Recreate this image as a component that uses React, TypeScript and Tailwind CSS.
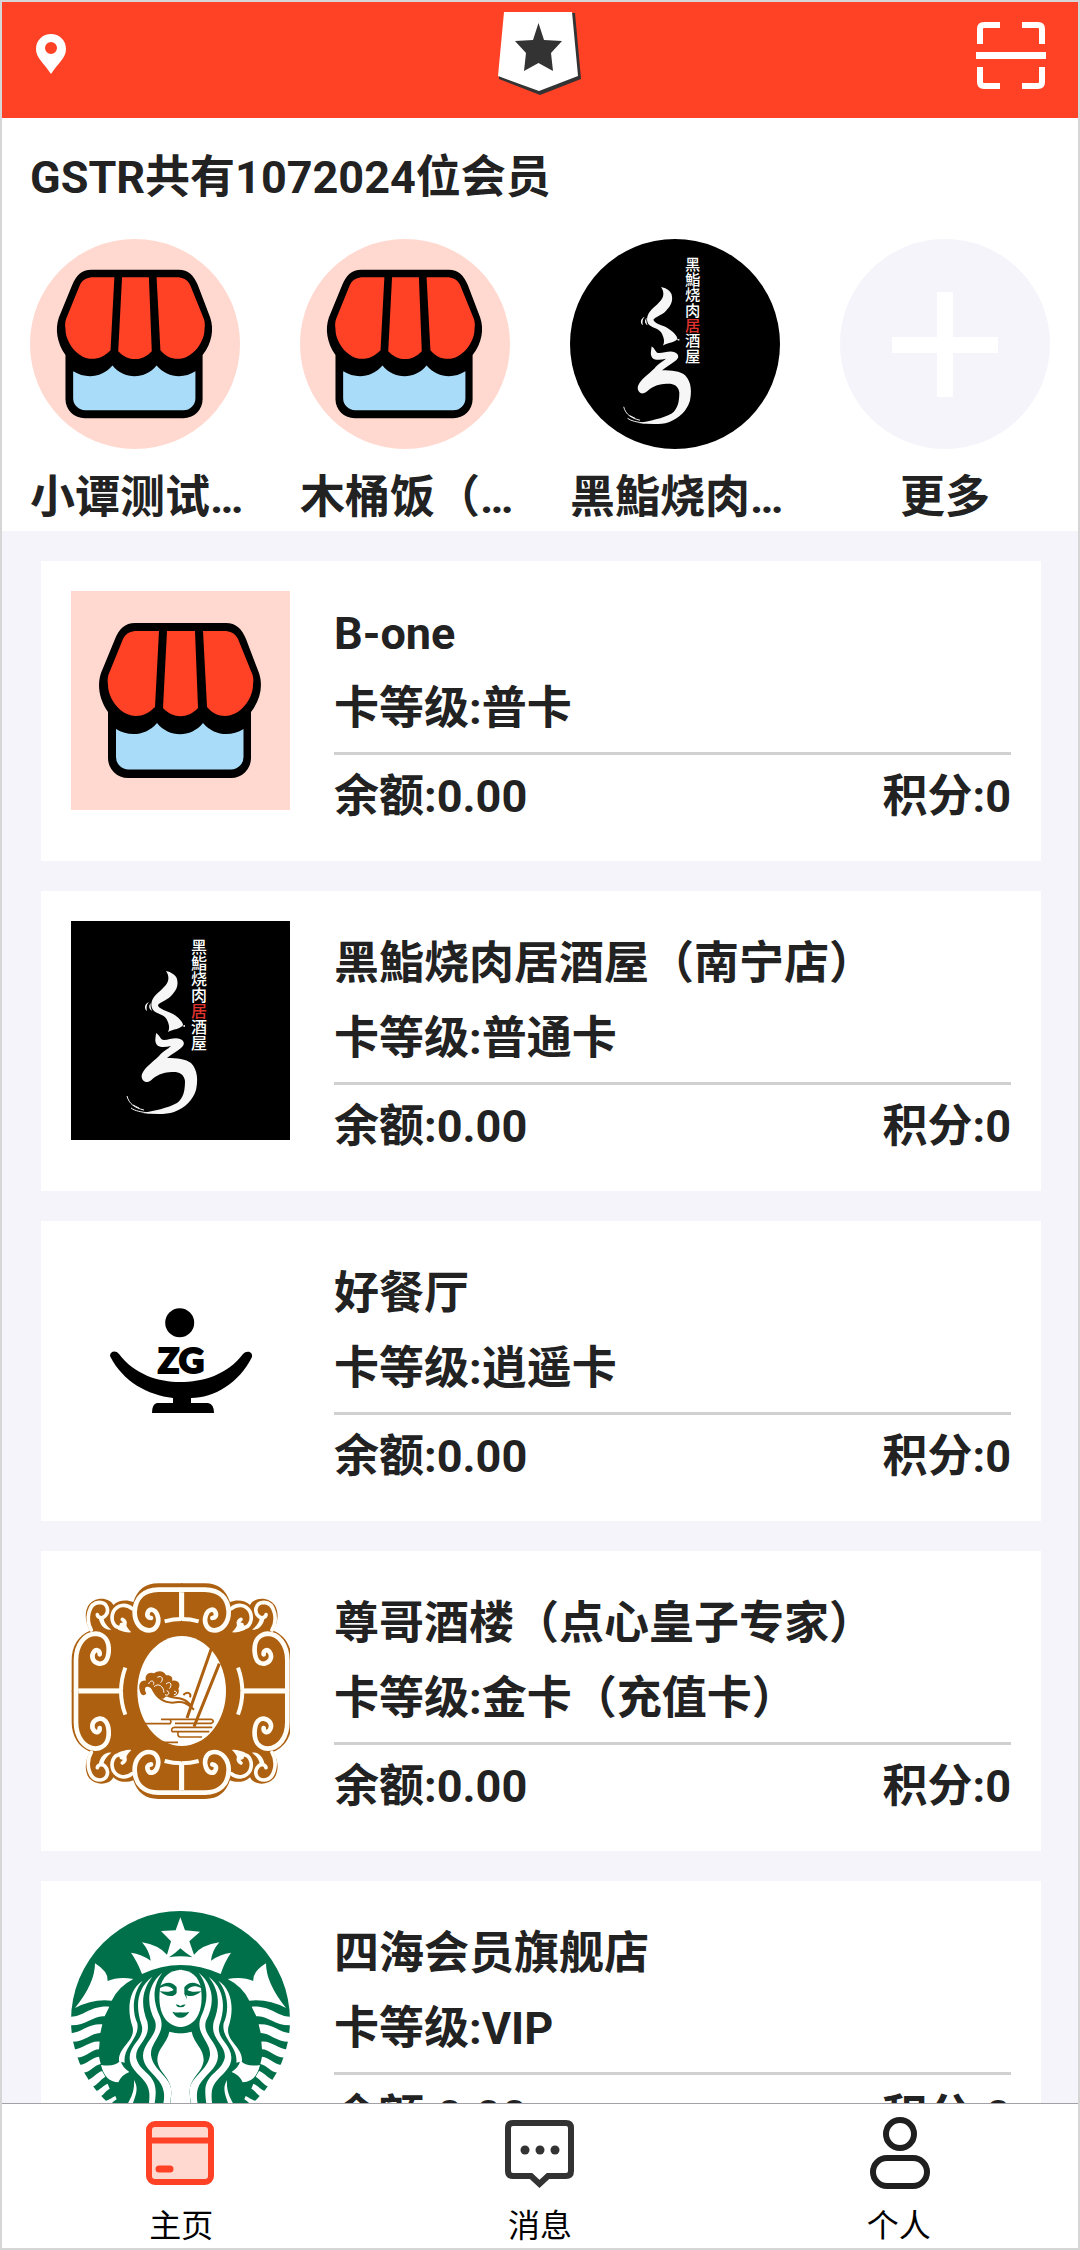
import React from "react";

type LogoName = "store" | "kuro" | "bowl" | "ornament" | "siren";

interface Shop {
  name: string;
  logo: LogoName;
}

interface Card extends Shop {
  level: string;
  balance: string;
  points: number;
}

const shops: Shop[] = [
  { name: "小谭测试…", logo: "store" },
  { name: "木桶饭（…", logo: "store" },
  { name: "黑鮨烧肉…", logo: "kuro" },
];

const cards: Card[] = [
  { name: "B-one", logo: "store", level: "普卡", balance: "0.00", points: 0 },
  { name: "黑鮨烧肉居酒屋（南宁店）", logo: "kuro", level: "普通卡", balance: "0.00", points: 0 },
  { name: "好餐厅", logo: "bowl", level: "逍遥卡", balance: "0.00", points: 0 },
  { name: "尊哥酒楼（点心皇子专家）", logo: "ornament", level: "金卡（充值卡）", balance: "0.00", points: 0 },
  { name: "四海会员旗舰店", logo: "siren", level: "VIP", balance: "0.00", points: 0 },
];

const StoreLogo = () => (
  <svg viewBox="0 0 219 219" className="block w-full h-full bg-[#ffd9cf]">
    <path d="M64 32H155C165 32 171 38 175 48L188 82C192 94 190 108 180 121V167a20 20 0 0 1-20 20H57a20 20 0 0 1-20-20V121C28 108 26 94 30 82L44 48C48 38 54 32 64 32Z" />
    <g fill="#ff4126">
      <path d="M66 40H88L84 116C78 122 72 125 65 125C50 125 37 108 37 94C36 88 37 84 39 80L52 48C55 42 60 40 66 40Z" />
      <path d="M96 40H124L127 117C117 128 102 128 92 117Z" />
      <path d="M66 40H87L83 116C78 122 72 125 65 125C50 125 37 108 37 94C36 88 37 84 39 80L52 48C55 42 60 40 66 40Z" transform="translate(219 0) scale(-1 1)" />
    </g>
    <path d="M45 138C58 146 75 145 86 132C98 147 120 147 132 132C143 145 160 146 172.500 138V166a12.500 12.500 0 0 1-12.500 12.500H58A12.500 12.500 0 0 1 45 166Z" fill="#a9dcf9" />
  </svg>
);

const KuroLogo = () => (
  <svg viewBox="0 0 219 219" className="block w-full h-full bg-black">
    <g fill="#f6f6f6">
      <path d="M95 50C100 51 105 54 106 58C108 66 104 71 100 75C95 80 89 81 87 84C87 88 97 90 102 93C107 96 112 101 112 104C110 108 102 108 97 111C99 107 98 103 96 99C94 94 87 93 83 90C79 86 80 80 83 76C88 70 95 66 97 60C98 56 97 53 95 50Z" />
      <path d="M78 81C73 83 73 88 76 90C75 86 76 83 78 81ZM80 82C77 85 78 88 81 90C80 87 79 85 80 82ZM111 105L114 104V106Z" />
      <path d="M85 112C89 114 89 119 93 119C98 119 104 116 109 118C114 120 114 124 110 127C105 131 101 133 96 137C106 137 115 138 120 142C127 149 127 160 125 169C122 179 114 187 103 191C94 194 82 193 71 192C83 190 97 187 106 182C113 177 114 168 114 160C113 153 108 151 103 151C96 151 90 152 84 156C80 159 79 161 75 161C71 160 70 156 71 153C74 146 82 141 88 135C92 130 97 128 100 125C95 126 89 127 86 124C83 120 85 116 85 112Z" />
    </g>
    <path d="M56 175C58 183 64 187 73 189M60 187C64 190 70 191 78 192M62 184L68 187" fill="none" stroke="#f6f6f6" strokeWidth="1" />
    <text x="128" y="18" fill="#fff" fontSize="16" fontWeight="500" className="font-['Noto_Sans_CJK_SC',sans-serif] [writing-mode:vertical-rl]">
      黑鮨烧肉<tspan fill="#e0332f">居</tspan>酒屋
    </text>
  </svg>
);

const BowlLogo = () => (
  <svg viewBox="0 0 219 219" className="block w-full h-full">
    <circle cx="108.700" cy="71.700" r="14.500" />
    <text x="110" y="122" fontSize="35" fontWeight="900" textAnchor="middle" stroke="#000" strokeWidth="2" className="font-[Lato,sans-serif]">ZG</text>
    <path d="M39 105C39 100 45 99 48 103C64 124 88 131 109 131C132 131 156 124 172 103C176 99 182 101 181 106C168 132 143 147 120 147V152H137Q143 153 143 162H81Q81 153 86 152H102V147C77 144 52 131 39 105Z" />
  </svg>
);

const OrnamentQuarter = () => (
  <>
    <path d="M397 70H325C285 70 262 90 250 126C230 118 205 120 190 135C178 110 130 108 113 140C102 165 108 190 120 212C85 225 65 260 65 300V395H397Z" fill="#ad6010" />
    <g fill="none" stroke="#fffdf5" strokeWidth="14" strokeLinecap="round">
      <path d="M396 89H325C280 90 256 115 254 155C253 190 275 211 297 211C320 211 330 187 322 165C316 148 300 144 294 156C289 167 294 173 303 174" />
      <path d="M78 395V300C78 255 103 222 137 221C165 223 178 245 176 275C174 304 160 313 147 311C127 307 122 288 132 275C140 266 150 272 149 283" />
      <path d="M395 97V180M85 394H215" strokeWidth="15" strokeLinecap="butt" />
      <path d="M344 184Q369 177 396 177M226 323Q213 358 213 395" strokeWidth="12" strokeLinecap="butt" />
      <path d="M246 146C228 130 202 134 190 155C180 178 191 203 210 203C226 202 230 185 217 178" strokeWidth="11" />
      <path d="M124 210C106 180 115 128 148 127C175 128 178 155 165 168C156 178 143 172 142 164" strokeWidth="11" />
    </g>
    <path d="M210 190L229 184C225 195 233 206 244 217C232 219 218 214 204 209ZM146 172L162 168C157 182 170 198 184 209C165 212 149 196 146 172Z" fill="#fffdf5" />
  </>
);

const OrnamentLogo = () => (
  <svg viewBox="63 63 657 657" className="block w-full h-full">
    <OrnamentQuarter />
    <g transform="translate(790 0) scale(-1 1)">
      <OrnamentQuarter />
    </g>
    <g transform="translate(0 787) scale(1 -1)">
      <OrnamentQuarter />
    </g>
    <g transform="translate(790 787) scale(-1 -1)">
      <OrnamentQuarter />
    </g>
    <ellipse cx="395" cy="393" rx="133" ry="165" fill="#fff" />
    <g fill="none" stroke="#ad6010">
      <path d="M484 266L411 474M508 311L432 500" strokeWidth="9" />
      <path d="M285 491H360Q366 484 359 479M333 478H484Q496 484 484 490H375M366 515Q362 503 374 502H487M366 515H478M384 517Q382 530 390 531H456M340 547H384" strokeWidth="5" />
      <path d="M305 380C318 415 345 432 378 427C400 424 412 430 432 449M340 398C360 425 400 400 425 440M400 405C412 392 425 400 420 412" strokeWidth="6" />
    </g>
    <path d="M272 400C263 378 268 360 288 362C282 345 298 334 312 340C325 328 345 334 348 346C362 344 370 352 366 362C384 358 394 372 385 386C392 402 375 415 356 408C340 408 345 422 330 414C312 402 310 388 298 382C284 376 282 390 289 400C285 408 276 408 272 400Z" fill="#ad6010" />
    <path d="M296 372C300 358 316 362 310 374M322 352C336 344 342 358 332 368M348 372C362 360 368 376 358 386M312 380C326 368 340 378 342 398M350 392C362 396 355 410 345 404M372 394C382 392 382 404 372 404" fill="none" stroke="#fff" strokeWidth="3" />
  </svg>
);

const SirenHalf = () => (
  <>
    <g fill="#fff">
      <path d="M135 250Q176 275 173 303Q205 289 250 297Q205 320 185 362Q130 355 75 384Q135 310 135 250Z" />
      <path d="M60 410C100 412 120 376 178 380L164 409C130 405 110 438 60 436Z" />
      <path d="M60 460C95 458 115 430 157 433L151 459C125 458 100 489 60 485Z" />
      <path d="M70 509C100 507 118 482 149 485L147 508C125 508 105 536 80 532Z" />
      <path d="M88 555C112 552 125 532 147 530L152 552C132 555 118 580 98 578Z" />
      <path d="M110 602C128 596 140 578 156 573L166 590C148 600 140 620 122 620Z" />
      <path d="M136 634C150 630 160 616 173 611L179 626C166 632 160 648 148 650Z" />
      <path d="M165 664C178 660 186 652 196 648L200 658C190 664 184 672 176 676Z" />
      <path d="M153 555Q195 562 212 541Q216 562 238 576Q215 584 205 607Q165 606 153 555Z" />
      <path d="M278 302C246 342 246 395 262 430C270 476 218 500 224 548L207 544C204 500 256 485 248 442C230 390 235 330 278 302Z" />
      <path d="M307 290C272 335 274 380 292 425C304 480 252 495 259 535C270 580 320 580 317 640C315 690 300 710 296 740H282C288 700 300 680 298 640C295 590 238 580 239 532C240 490 288 475 274 432C256 380 260 325 307 290Z" />
      <path d="M337 278C306 320 308 365 330 410C350 460 300 485 303 525C310 575 365 590 364 635C362 690 340 710 340 745H322C326 700 345 680 342 640C338 590 280 575 279 527C280 485 328 465 315 422C292 380 285 320 337 278Z" />
      <path d="M252 600C275 640 240 660 240 720L222 700C230 665 255 650 252 600Z" />
      <path d="M396 269C358 271 336 290 330 325C325 365 330 398 348 420C362 436 380 441 396 441Z" />
      <path d="M396 461Q374 460 358 455C352 490 322 505 322 540C325 580 365 590 364 640C360 690 352 715 350 750H396Z" />
    </g>
    <path d="M330 319C345 303 370 305 380 322V338C374 352 348 352 329 334C350 336 362 336 371 330C360 316 345 316 330 324Z" fill="#00704a" />
  </>
);

const SirenLogo = () => (
  <svg viewBox="63 93 657 657" className="block w-full h-full">
    <circle cx="391.500" cy="421.500" r="328.500" fill="#00704a" />
    <SirenHalf />
    <g transform="translate(783 0) scale(-1 1)">
      <SirenHalf />
    </g>
    <path d="M243 218Q275 222 302 242Q298 212 276 187Q325 195 351 224L363 184L333 153L377 151L391 112L405 151L450 155L418 184L432 224Q455 195 508 187Q486 212 483 242Q510 222 543 218Q524 245 512 282Q391 228 276 282Q262 245 243 218Z" fill="#fff" />
    <path d="M357 232Q376 220 391 205Q408 220 427 232Q391 226 357 232ZM367 395Q380 399 391 397Q404 399 418 395Q408 413 391 413Q376 413 367 395ZM377 374Q384 372 391 378Q399 372 407 374Q402 382 391 382Q382 382 377 374ZM402 340L411 358L408 340Z" fill="#00704a" />
  </svg>
);

const logos = {
  store: StoreLogo,
  kuro: KuroLogo,
  bowl: BowlLogo,
  ornament: OrnamentLogo,
  siren: SirenLogo,
};

const Header = () => (
  <header className="h-[116px] shrink-0 bg-[#ff4126] grid grid-cols-3 items-start pl-[34px] pr-[32px]">
    <button aria-label="定位" className="justify-self-start mt-8">
      <svg width="30" height="40" viewBox="0 0 30 40">
        <path fillRule="evenodd" fill="#fff" d="M15 0C23 0 30 6 30 15C30 24 22 29 15 40C8 29 0 24 0 15C0 6 7 0 15 0ZM15 8a6 6 0 1 0 0 12a6 6 0 1 0 0-12Z" />
      </svg>
    </button>
    <svg width="86" height="84" viewBox="0 0 86 84" className="justify-self-center mt-[10px]">
      <path d="M8 1H77L83 67L42 83L1 67V64Z" fill="#333" />
      <path d="M6 0H74L80 64L41 79L0 64Z" fill="#fff" />
      <path d="M40.500 11L46 28L64 29L53 41L55 59L40.500 51L26 59L28 41L17 29L35 28Z" fill="#333" />
    </svg>
    <button aria-label="扫一扫" className="justify-self-end mt-[19px]">
      <svg width="70" height="70" viewBox="0 0 70 70" fill="none" stroke="#fff">
        <path d="M4 23V8Q4 4 8 4H24M46 4H62Q66 4 66 8V23M4 46V61Q4 65 8 65H24M46 65H62Q66 65 66 61V46" strokeWidth="6" />
        <path d="M0 34.500H70" strokeWidth="7" />
      </svg>
    </button>
  </header>
);

const ShopStrip = () => (
  <section className="bg-white px-7 pt-[30px] pb-[3px]">
    <h1 className="leading-[60px]">GSTR共有1072024位会员</h1>
    <ul className="grid grid-cols-4 gap-[60px] mt-[31px]">
      {shops.map((shop) => {
        const Logo = logos[shop.logo];
        return (
          <li key={shop.name} className="min-w-0">
            <a href="#" className="block">
              <div className="aspect-square rounded-full overflow-hidden">
                <Logo />
              </div>
              <p className="mt-[19px] leading-[60px] whitespace-nowrap">{shop.name}</p>
            </a>
          </li>
        );
      })}
      <li>
        <a href="#" className="block">
          <div className="aspect-square rounded-full bg-[#f4f4fa]">
            <svg viewBox="0 0 210 210" className="block w-full h-full">
              <path d="M105 53V158M52 106H158" stroke="#fff" strokeWidth="16" />
            </svg>
          </div>
          <p className="mt-[19px] leading-[60px] text-center">更多</p>
        </a>
      </li>
    </ul>
  </section>
);

const MemberCard = ({ card }: { card: Card }) => {
  const Logo = logos[card.logo];

  return (
    <a href="#" className="bg-white h-[300px] p-[30px] flex items-start gap-11">
      <div className="w-[219px] h-[219px] shrink-0">
        <Logo />
      </div>
      <div className="flex-1 min-w-0 pt-[5px]">
        <h2 className="leading-[75px] truncate">{card.name}</h2>
        <p className="leading-[75px]">卡等级:{card.level}</p>
        <div className="flex justify-between mt-[6px] border-t-[3px] border-[#d0d0d0] leading-[84px]">
          <span>余额:{card.balance}</span>
          <span>积分:{card.points}</span>
        </div>
      </div>
    </a>
  );
};

const TabBar = () => (
  <nav className="shrink-0 bg-white border-t border-[#a3a1a5] grid grid-cols-3 pt-[13px] text-[32px] leading-[44px] font-normal text-black">
    <a href="#" className="flex flex-col items-center gap-[15px]">
      <svg width="72" height="72" viewBox="0 0 72 72">
        <rect x="4" y="7" width="62" height="58" rx="6" fill="#ffd9cf" stroke="#ff4126" strokeWidth="6" />
        <path d="M4 23.500H66" stroke="#ff4126" strokeWidth="6" />
        <path d="M14 52H25" stroke="#ff4126" strokeWidth="7" strokeLinecap="round" />
      </svg>
      主页
    </a>
    <a href="#" className="flex flex-col items-center gap-[15px]">
      <svg width="72" height="72" viewBox="0 0 72 72" fill="#333">
        <path d="M9 6H62Q67 6 67 11V54Q67 59 62 59H44L35.500 67L27 59H9Q4 59 4 54V11Q4 6 9 6Z" fill="none" stroke="#333" strokeWidth="6" />
        <circle cx="21" cy="33" r="4.500" />
        <circle cx="36" cy="33" r="4.500" />
        <circle cx="51" cy="33" r="4.500" />
      </svg>
      消息
    </a>
    <a href="#" className="flex flex-col items-center gap-[15px]">
      <svg width="72" height="72" viewBox="0 0 72 72" fill="none" stroke="#1f1f1f" strokeWidth="6">
        <circle cx="37" cy="17" r="14" />
        <rect x="10" y="41" width="54" height="28" rx="14" />
      </svg>
      个人
    </a>
  </nav>
);

const App = () => {
  return (
    <div className="h-screen flex flex-col border-2 border-[#d6d6d6] bg-[#f4f4fa] font-[Roboto,'Noto_Sans_CJK_SC',sans-serif] font-bold text-[45px] text-[#222]">
      <Header />
      <main className="flex-1 min-h-0 overflow-y-auto [scrollbar-width:none]">
        <ShopStrip />
        <div className="flex flex-col gap-[30px] pt-[30px] pb-[30px] pl-[39px] pr-[37px]">
          {cards.map((card) => (
            <MemberCard key={card.name} card={card} />
          ))}
        </div>
      </main>
      <TabBar />
    </div>
  );
};

export default App;
